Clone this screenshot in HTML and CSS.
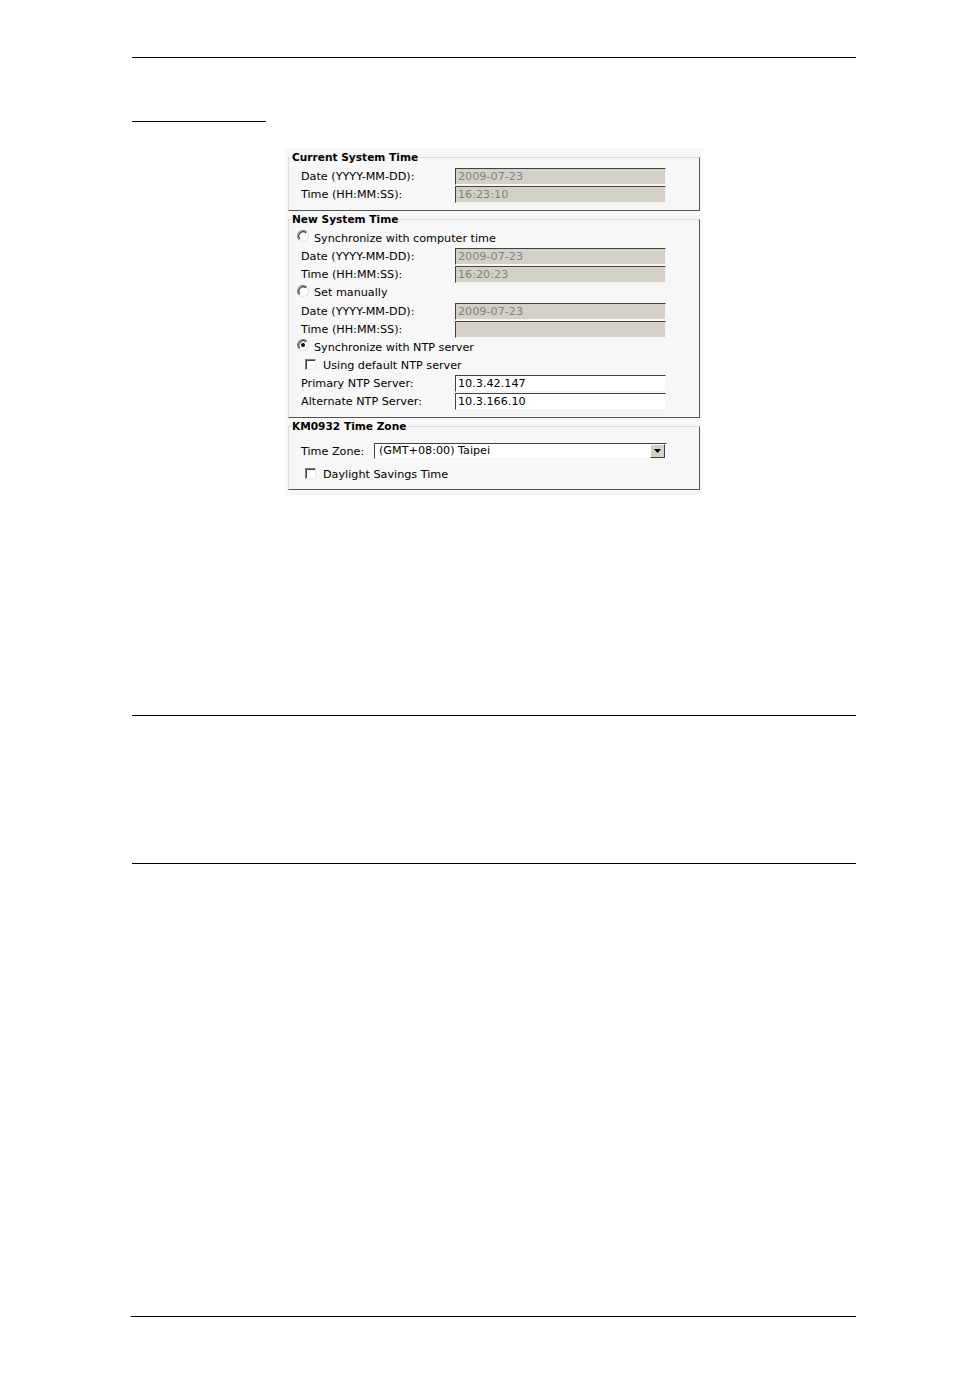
FILE: index.html
```html
<!DOCTYPE html>
<html>
<head>
<meta charset="utf-8">
<link rel="stylesheet" href="styles.css">
</head>
<body>
<div class="page">
  <div class="rule rule-top"></div>
  <div class="rule rule-short"></div>
  <div class="panel">
    <fieldset class="fs fs1">
      <legend>Current System Time</legend>
      <div class="row"><span class="lbl">Date (YYYY-MM-DD):</span><span class="field dis">2009-07-23</span></div>
      <div class="row"><span class="lbl">Time (HH:MM:SS):</span><span class="field dis">16:23:10</span></div>
    </fieldset>
    <fieldset class="fs fs2">
      <legend>New System Time</legend>
      <div class="row radio-row"><svg class="radio" width="12" height="12" viewBox="0 0 12 12"><circle cx="6" cy="6" r="5.5" fill="#fff"/><path d="M2.1 9.9 A5.5 5.5 0 0 1 9.9 2.1" fill="none" stroke="#8c8c8c" stroke-width="1.1"/><path d="M2.9 9.1 A4.4 4.4 0 0 1 9.1 2.9" fill="none" stroke="#303030" stroke-width="1.1"/><path d="M9.9 2.1 A5.5 5.5 0 0 1 2.1 9.9" fill="none" stroke="#e4e4e4" stroke-width="1.1"/></svg><span class="opt">Synchronize with computer time</span></div>
      <div class="row"><span class="lbl">Date (YYYY-MM-DD):</span><span class="field dis">2009-07-23</span></div>
      <div class="row"><span class="lbl">Time (HH:MM:SS):</span><span class="field dis">16:20:23</span></div>
      <div class="row radio-row tall"><svg class="radio" width="12" height="12" viewBox="0 0 12 12"><circle cx="6" cy="6" r="5.5" fill="#fff"/><path d="M2.1 9.9 A5.5 5.5 0 0 1 9.9 2.1" fill="none" stroke="#8c8c8c" stroke-width="1.1"/><path d="M2.9 9.1 A4.4 4.4 0 0 1 9.1 2.9" fill="none" stroke="#303030" stroke-width="1.1"/><path d="M9.9 2.1 A5.5 5.5 0 0 1 2.1 9.9" fill="none" stroke="#e4e4e4" stroke-width="1.1"/></svg><span class="opt">Set manually</span></div>
      <div class="row"><span class="lbl">Date (YYYY-MM-DD):</span><span class="field dis">2009-07-23</span></div>
      <div class="row"><span class="lbl">Time (HH:MM:SS):</span><span class="field dis"></span></div>
      <div class="row radio-row"><svg class="radio" width="12" height="12" viewBox="0 0 12 12"><circle cx="6" cy="6" r="5.5" fill="#fff"/><path d="M2.1 9.9 A5.5 5.5 0 0 1 9.9 2.1" fill="none" stroke="#8c8c8c" stroke-width="1.1"/><path d="M2.9 9.1 A4.4 4.4 0 0 1 9.1 2.9" fill="none" stroke="#303030" stroke-width="1.1"/><path d="M9.9 2.1 A5.5 5.5 0 0 1 2.1 9.9" fill="none" stroke="#e4e4e4" stroke-width="1.1"/><circle cx="6" cy="6" r="2" fill="#000"/></svg><span class="opt">Synchronize with NTP server</span></div>
      <div class="row check-row"><span class="check"></span><span class="opt">Using default NTP server</span></div>
      <div class="row"><span class="lbl">Primary NTP Server:</span><span class="field">10.3.42.147</span></div>
      <div class="row"><span class="lbl">Alternate NTP Server:</span><span class="field">10.3.166.10</span></div>
    </fieldset>
    <fieldset class="fs fs3">
      <legend>KM0932 Time Zone</legend>
      <div class="row tz-row"><span class="tz-lbl">Time Zone:</span><span class="select"><span class="select-text">(GMT+08:00) Taipei</span><span class="select-btn"><svg width="7" height="4" viewBox="0 0 7 4"><path d="M0 0 H7 L3.5 4 Z" fill="#000"/></svg></span></span></div>
      <div class="row check-row dst"><span class="check"></span><span class="opt">Daylight Savings Time</span></div>
    </fieldset>
  </div>
  <div class="rule rule-a"></div>
  <div class="rule rule-b"></div>
  <div class="rule rule-c"></div>
</div>
</body>
</html>
```

FILE: styles.css
```css
html, body {
  margin: 0;
  padding: 0;
  background: #fff;
}
.page {
  width: 724px;
  margin-left: 132px;
  padding-top: 57px;
  padding-bottom: 67px;
  font-family: "DejaVu Sans", Verdana, sans-serif;
  font-size: 11.2px;
  color: #000;
}
.rule {
  height: 1px;
  background: #000;
}
.rule-short {
  width: 134px;
  margin-top: 63px;
}
.panel {
  margin-top: 26px;
  margin-left: 153px;
  width: 412px;
  padding: 3px 3px 5px 3px;
  background: #f7f7f7;
}
.fs {
  margin: 0;
  padding: 3px 0 7px 0;
  border: 1px solid;
  border-color: #dcdcdc #555 #555 #dcdcdc;
  min-width: 0;
}
.fs + .fs {
  margin-top: 2px;
}
.fs legend {
  padding: 0 2px 0 0;
  margin-left: 3px;
  font-weight: bold;
  font-size: 10.6px;
  line-height: 13px;
}
.fs1 {
  padding-bottom: 7px;
}
.row {
  display: flex;
  align-items: center;
  height: 18px;
  padding-left: 12px;
}
.lbl {
  width: 154px;
  flex: none;
  white-space: nowrap;
}
.field {
  box-sizing: border-box;
  width: 211px;
  height: 17px;
  padding: 0 0 0 2px;
  border: 1px solid;
  border-color: #404040 #f4f4f4 #f4f4f4 #404040;
  background: #fff;
  line-height: 15px;
  white-space: nowrap;
  overflow: hidden;
}
.field.dis {
  background: #d4d0c8;
  color: #808080;
}
.radio-row {
  padding-left: 8px;
}
.radio-row.tall {
  height: 19px;
}
.radio {
  flex: none;
  margin-top: -4px;
  margin-right: 5px;
}
.check-row {
  padding-left: 16px;
}
.check {
  box-sizing: border-box;
  flex: none;
  width: 11px;
  height: 11px;
  margin-top: -2px;
  margin-right: 7px;
  border: 1px solid;
  border-color: #808080 #e8e8e8 #e8e8e8 #808080;
  background: #fff;
  box-shadow: inset 1px 1px 0 #404040;
}
.fs3 {
  padding-bottom: 5px;
}
.tz-row {
  height: 20px;
  margin-top: 5px;
}
.tz-lbl {
  width: 73px;
  flex: none;
}
.select {
  box-sizing: border-box;
  display: flex;
  align-items: center;
  width: 293px;
  height: 16px;
  border: 1px solid;
  border-color: #404040 #f4f4f4 #f4f4f4 #404040;
  background: #fff;
}
.select-text {
  flex: 1;
  padding-left: 4px;
  line-height: 14px;
}
.select-btn {
  box-sizing: border-box;
  display: flex;
  align-items: center;
  justify-content: center;
  width: 15px;
  height: 14px;
  margin-right: 1px;
  background: #d4d0c8;
  border: 1px solid;
  border-color: #fff #404040 #404040 #fff;
}
.dst {
  height: 20px;
  margin-top: 3px;
}
.rule-a {
  margin-top: 220px;
}
.rule-b {
  margin-top: 147px;
}
.rule-c {
  margin-top: 452px;
  margin-left: -1px;
  width: 725px;
}
```
